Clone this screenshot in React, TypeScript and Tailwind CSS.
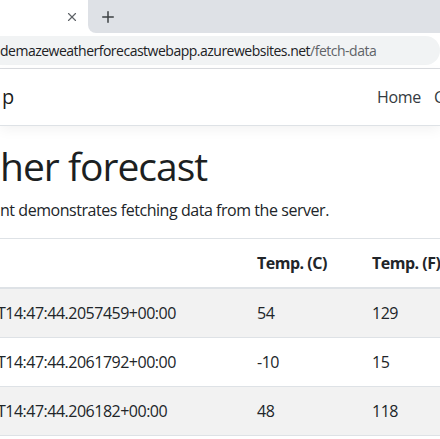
import { Plus, X } from "lucide-react";

const rows = [
  { date: "T14:47:44.2057459+00:00", c: "54", f: "129" },
  { date: "T14:47:44.2061792+00:00", c: "-10", f: "15" },
  { date: "T14:47:44.206182+00:00", c: "48", f: "118" },
];

const font = "font-['Segoe_UI','Open_Sans','Liberation_Sans',sans-serif]";

export default function App() {
  return (
    <div className={`h-[439px] w-[440px] overflow-hidden bg-white text-[#212529] ${font}`}>
      {/* browser tab strip */}
      <div className="flex h-[33px] bg-white">
        <div className="flex w-[88px] shrink-0 items-center justify-end pr-[9px]">
          <X size={14} strokeWidth={2} className="text-[#5f6368]" />
        </div>
        <div className="flex flex-1 items-center rounded-bl-[8px] bg-[#dee1e6] pl-[11px]">
          <Plus size={18} strokeWidth={2} className="text-[#3c4043]" />
        </div>
      </div>

      {/* toolbar / omnibox */}
      <div className="flex h-[36px] items-center border-b border-[#dadce0] bg-white pb-[1px]">
        <div className="-ml-4 flex h-[29px] flex-1 items-center rounded-full bg-[#f1f3f4] pl-4 text-[14px] tracking-[-0.5px] whitespace-nowrap">
          <span className="text-[#202124]">demazeweatherforecastwebapp.azurewebsites.net</span>
          <span className="text-[#5f6368]">/fetch-data</span>
        </div>
      </div>

      {/* app navbar */}
      <header className="relative flex h-[57px] items-center justify-between border-b border-[#dee2e6] bg-white shadow-[0_4px_12px_rgba(0,0,0,0.05)]">
        <span className="pl-[2px] text-[20px] text-black/90">p</span>
        <nav className="flex items-center gap-[13px] text-[16px] tracking-[-0.3px] whitespace-nowrap text-[#343a40]">
          <span>Home</span>
          <span className="w-[6px] overflow-hidden">Counter</span>
        </nav>
      </header>

      <main className="mt-4">
        <h1 className="mb-2 text-[39px] leading-[1.23] font-medium tracking-[-1px] whitespace-nowrap text-[#1c1f22]">
          her forecast
        </h1>
        <p className="mb-4 text-[16px] leading-6 tracking-[-0.45px] whitespace-nowrap">
          nt demonstrates fetching data from the server.
        </p>

        <div className="border-t border-[#dee2e6] text-[16px] leading-6 tracking-[-0.5px]">
          <div className="grid grid-cols-[245px_115px_80px] border-b-2 border-[#dee2e6] font-bold whitespace-nowrap">
            <div className="py-3" />
            <div className="px-3 py-3">Temp. (C)</div>
            <div className="overflow-hidden px-3 py-3">Temp. (F)</div>
          </div>
          {rows.map((r, i) => (
            <div
              key={r.date}
              className={`grid grid-cols-[245px_115px_80px] border-b border-[#dee2e6] whitespace-nowrap ${
                i % 2 === 0 ? "bg-[#f2f2f2]" : "bg-white"
              }`}
            >
              <div className="-ml-[3px] py-3">{r.date}</div>
              <div className="px-3 py-3">{r.c}</div>
              <div className="px-3 py-3">{r.f}</div>
            </div>
          ))}
        </div>
      </main>
    </div>
  );
}
